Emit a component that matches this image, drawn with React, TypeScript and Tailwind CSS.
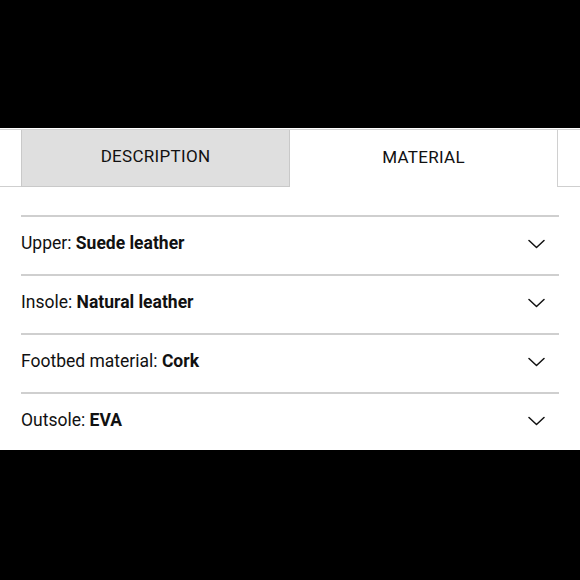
import React, { useState } from 'react';

const rows = [
  { label: 'Upper', value: 'Suede leather' },
  { label: 'Insole', value: 'Natural leather' },
  { label: 'Footbed material', value: 'Cork' },
  { label: 'Outsole', value: 'EVA' },
];

const Chevron: React.FC = () => (
  <svg width="17" height="10" viewBox="0 0 17 10" fill="none" className="shrink-0">
    <path d="M1 1.5L8.5 8.5L16 1.5" stroke="#111" strokeWidth="1.5" strokeLinecap="round" strokeLinejoin="round" />
  </svg>
);

const App: React.FC = () => {
  const [tab, setTab] = useState<'description' | 'material'>('material');

  return (
    <div className="w-[580px] h-[580px] bg-black flex flex-col" style={{ fontFamily: 'Roboto, "Liberation Sans", sans-serif' }}>
      <div className="h-[128px]" />
      <div className="h-[322px] bg-white flex flex-col">
        <div className="mt-[1px] flex border-t border-[#d4d4d4]">
          <div className="w-[21px] border-b border-[#cfcfcf]" />
          <button
            onClick={() => setTab('description')}
            className={`w-[269px] h-[57px] flex items-center justify-center pb-[2px] text-[17px] text-[#111] tracking-[0.3px] border-r border-[#c9c9c9] ${
              tab === 'description' ? 'bg-white' : 'bg-[#dfdfdf] border-b border-l'
            }`}
          >
            DESCRIPTION
          </button>
          <button
            onClick={() => setTab('material')}
            className={`w-[268px] h-[57px] flex items-center justify-center pb-[2px] text-[17px] text-[#111] tracking-[0.3px] border-r border-[#d0d0d0] ${
              tab === 'material' ? 'bg-white' : 'bg-[#dfdfdf] border-b'
            }`}
          >
            MATERIAL
          </button>
          <div className="flex-1 border-b border-[#cfcfcf]" />
        </div>
        <div className="px-[21px] pt-[28px]">
          {rows.map((r) => (
            <div key={r.label} className="h-[59px] border-t-2 border-[#cfcfcf] flex items-center justify-between pr-[14px] pb-[4px]">
              <span className="text-[17.5px] text-[#111]">
                {r.label}: <span className="font-bold">{r.value}</span>
              </span>
              <Chevron />
            </div>
          ))}
        </div>
      </div>
      <div className="flex-1" />
    </div>
  );
};

export default App;
